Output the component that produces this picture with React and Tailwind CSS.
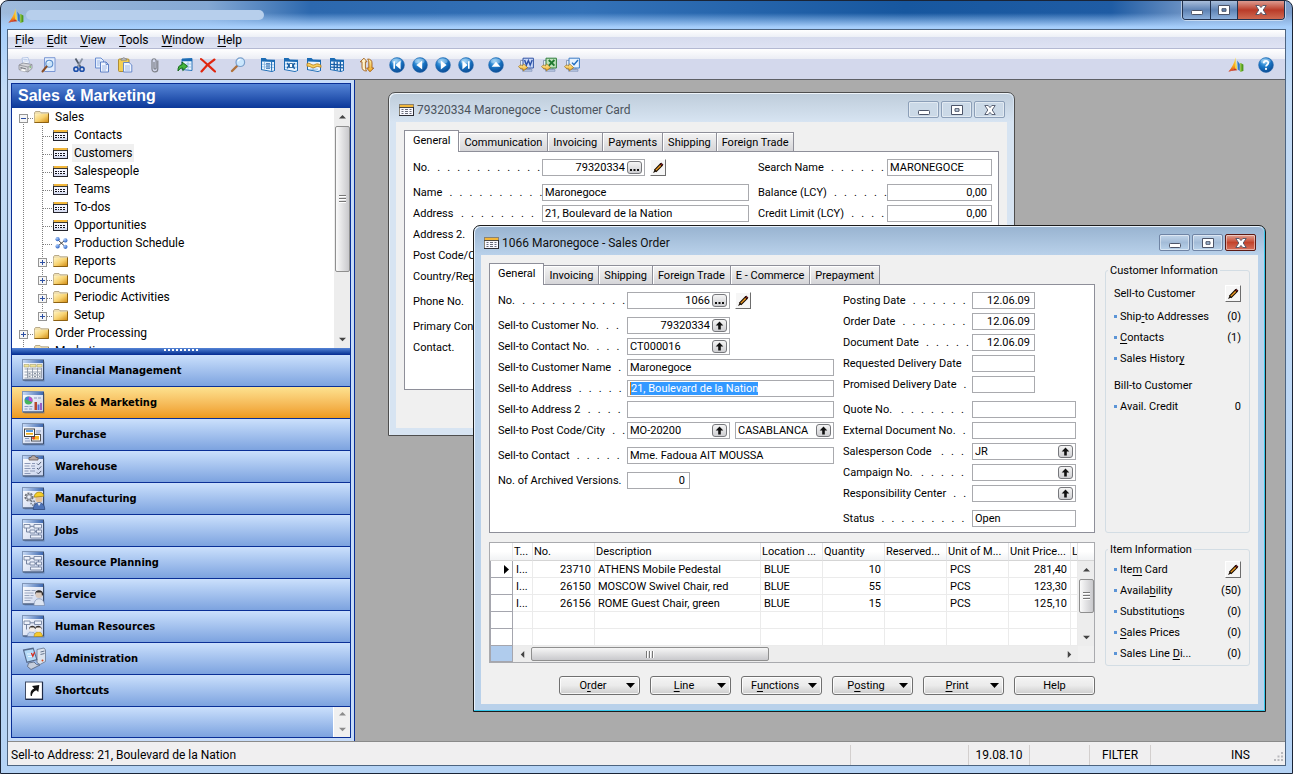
import React from "react";

/* ---------- shared SVG paint ---------- */

function Defs() {
  return (
    <svg className="absolute h-0 w-0" aria-hidden="true">
      <defs>
        <radialGradient id="orb" cx="0.4" cy="0.25" r="0.85">
          <stop offset="0" stopColor="#7cc4f4" />
          <stop offset="0.45" stopColor="#1a78c8" />
          <stop offset="1" stopColor="#083f86" />
        </radialGradient>
        <linearGradient id="folder" x1="0" y1="0" x2="1" y2="1">
          <stop offset="0" stopColor="#fff3c0" />
          <stop offset="0.5" stopColor="#f7d270" />
          <stop offset="1" stopColor="#d08a10" />
        </linearGradient>
        <linearGradient id="sheet" x1="0" y1="0" x2="1" y2="1">
          <stop offset="0" stopColor="#ffffff" />
          <stop offset="1" stopColor="#c4d0ec" />
        </linearGradient>
        <linearGradient id="bar" x1="0" y1="0" x2="1" y2="0">
          <stop offset="0" stopColor="#c5d8f4" />
          <stop offset="1" stopColor="#3f69b0" />
        </linearGradient>
        <linearGradient id="gold" x1="0" y1="0" x2="0" y2="1">
          <stop offset="0" stopColor="#fff2a8" />
          <stop offset="1" stopColor="#efa51c" />
        </linearGradient>
        <linearGradient id="sail" x1="0" y1="0" x2="0" y2="1">
          <stop offset="0" stopColor="#ffe34a" />
          <stop offset="0.6" stopColor="#f9a51a" />
          <stop offset="1" stopColor="#d6321c" />
        </linearGradient>
        <radialGradient id="dot" cx="0.35" cy="0.3" r="0.8">
          <stop offset="0" stopColor="#a8ccff" />
          <stop offset="1" stopColor="#1f55b8" />
        </radialGradient>
      </defs>
    </svg>
  );
}

function Svg({ children, className = "h-4 w-4", box = "0 0 16 16" }) {
  return (
    <svg viewBox={box} className={"block shrink-0 " + className} fill="none" aria-hidden="true">
      {children}
    </svg>
  );
}

/* ---------- toolbar icons ---------- */

const Logo = () => (
  <Svg>
    <path d="M7.4 .6 C6.6 6 3.6 11 .4 14.8 L7.6 11.8 Z" fill="url(#sail)" />
    <path d="M7.4 .6 L7.2 11.4 L9.4 13 Z" fill="#f3d63c" />
    <path d="M.4 14.8 L7.4 11.4 L9.4 13.2 L4.4 13.8 Z" fill="#c9381f" />
    <path d="M9.2 3.6 L11.8 7 V14 L9.8 12.6 Z" fill="#2f79c3" />
    <path d="M9.2 3.6 L10.2 12.8 L9.6 12.2 Z" fill="#7fb5e6" />
    <path d="M12.4 6 L15.4 7.6 V14 L12.4 14.8 Z" fill="#4f9a1e" />
    <path d="M12.4 6 L13.4 6.6 V14.5 L12.4 14.8 Z" fill="#9fd23c" />
  </Svg>
);

const Printer = () => (
  <Svg>
    <path d="M4 1 L10 .5 L11.5 6 L5 7 Z" fill="#f4f8ff" stroke="#9fb4dc" strokeWidth=".7" />
    <path d="M5.2 2.5h4.4M5.6 4h4.4" stroke="#a9bde2" strokeWidth=".7" />
    <path d="M1 8 L5 6 L14 7.5 V11.5 L10 15 L1 12.5 Z" fill="#d5d6da" stroke="#8b8d94" strokeWidth=".8" />
    <path d="M1 8 L10 10 L14 7.5 M10 10 V15" stroke="#8b8d94" strokeWidth=".8" />
    <path d="M2.5 10 L8 11.4 V13 L2.5 11.6 Z" fill="#6e7078" />
    <path d="M4 11.5 L8.5 12.6 L7 14.8 L2 13.6Z" fill="#fff" stroke="#9a9ca3" strokeWidth=".5" />
    <circle cx="12.3" cy="10" r=".8" fill="#5cb84a" />
  </Svg>
);

const Preview = () => (
  <Svg>
    <path d="M3.5 .7 H14 V14.5 H3.5 Z" fill="#e3edfd" stroke="#6f8fd0" strokeWidth=".9" />
    <circle cx="8.3" cy="6.8" r="3.5" fill="#c9e4fb" stroke="#5b8cc9" strokeWidth="1.1" />
    <path d="M6.5 6 a2.2 2.2 0 0 1 2-1.5" stroke="#fff" strokeWidth="1" />
    <path d="M5.6 9.5 L1.5 14.5" stroke="#8a4e26" strokeWidth="2" strokeLinecap="round" />
  </Svg>
);

const Cut = () => (
  <Svg>
    <path d="M4.5 1.5 L9.6 10" stroke="#4f5a68" strokeWidth="1.7" />
    <path d="M11.5 1.5 L6.4 10" stroke="#8a95a5" strokeWidth="1.7" />
    <circle cx="5" cy="12.2" r="2.1" stroke="#1c4ea8" strokeWidth="1.6" />
    <circle cx="11" cy="12.2" r="2.1" stroke="#1c4ea8" strokeWidth="1.6" />
  </Svg>
);

const Copy = () => (
  <Svg>
    <path d="M1.5 1 H7 L9.5 3.5 V11 H1.5 Z" fill="#e4eefd" stroke="#5f84cc" strokeWidth=".9" />
    <path d="M6.5 5 H12 L14.5 7.5 V15 H6.5 Z" fill="#f1f6ff" stroke="#4f75c0" strokeWidth=".9" />
    <path d="M12 5 V7.5 H14.5" stroke="#4f75c0" strokeWidth=".8" />
    <path d="M8 9h5M8 11h5M8 13h4M3 4h3M3 6h3M3 8h2.5" stroke="#8fabe0" strokeWidth=".8" />
  </Svg>
);

const Paste = () => (
  <Svg>
    <rect x="1.5" y="2" width="10.5" height="12.5" rx="1" fill="#f3cf52" stroke="#a8842a" strokeWidth=".9" />
    <path d="M4 3.2 V1.8 H5.3 C5.5 .4 8 .4 8.3 1.8 H9.6 V3.2 Z" fill="#c3c6cc" stroke="#777" strokeWidth=".7" />
    <path d="M6.5 5.5 H12 L14.8 8 V15 H6.5 Z" fill="#eff5ff" stroke="#5b80c6" strokeWidth=".9" />
    <path d="M8 9h5M8 11h5M8 13h5" stroke="#8fabe0" strokeWidth=".8" />
  </Svg>
);

const Clip = () => (
  <Svg>
    <path d="M10.8 3.5 V12 A2.9 2.9 0 0 1 5 12 V3.4 A2.1 2.1 0 0 1 9.1 3.4 V11.2 A1.1 1.1 0 0 1 7 11.2 V5" stroke="#7d8088" strokeWidth="1.2" />
  </Svg>
);

const BlueGrid = ({ children }) => (
  <Svg>
    <path d="M1 1 H5.5 L7 2.4 L15 2.8 V13.8 L12 15 L1 13 Z" fill="#1b6bb4" />
    <path d="M2 4.6 L14 5 V13.4 L11.6 14 L2 12.2 Z" fill="#e9f4ff" />
    {children}
  </Svg>
);

const GoTo = () => (
  <Svg>
    <path d="M5 2 L15 1.5 V13.5 L5 12.5 Z" fill="#eaf5ff" stroke="#1b6bb4" strokeWidth=".9" />
    <path d="M5 2 L15 1.5 V4.2 L5 4.3 Z" fill="#1b6bb4" />
    <path d="M8.5 7h6M8.5 10h6M11 4.5v8.5" stroke="#7db0de" strokeWidth=".7" />
    <path d="M5 5 L10.5 9.2 L5.8 13.6 V11 C3.8 11 2.4 12 1 14 C.8 10.5 2 8 5.2 7.6 Z" fill="#42b53c" stroke="#0d5c14" strokeWidth=".9" />
  </Svg>
);

const Delete = () => (
  <Svg>
    <path d="M1 2 C6 6 10 10 15 14.5 M14.5 2.5 C9 6 5 10 1.5 14.5" stroke="#e0260f" strokeWidth="2.1" strokeLinecap="round" />
  </Svg>
);

const Find = () => (
  <Svg>
    <path d="M7 9 L2 14" stroke="#b0713a" strokeWidth="2.4" strokeLinecap="round" />
    <circle cx="10.3" cy="5.2" r="4.3" fill="#cbe7fd" stroke="#7a9fcb" strokeWidth="1.2" />
    <path d="M7.8 4.4 A3 3 0 0 1 10.4 2.4" stroke="#fff" strokeWidth="1.2" />
  </Svg>
);

const GridA = () => (
  <BlueGrid>
    <path d="M4.5 4.6v8M2 7.2l12 .6M2 9.8l12 .8" stroke="#7db0de" strokeWidth=".7" />
    <path d="M6 6.8h4M6 9h4M6 11.2h4" stroke="#1b5fa8" strokeWidth="1" />
    <path d="M11.6 4.8v9" stroke="#1b6bb4" strokeWidth="1" />
  </BlueGrid>
);
const GridB = () => (
  <BlueGrid>
    <path d="M2 7h12M2 10.2h12" stroke="#7db0de" strokeWidth=".7" />
    <path d="M4.2 6 L6 8.6 L4.2 11.4 M11.6 6 L10 8.8 L11.6 11.8" stroke="#155ea6" strokeWidth="1.5" />
    <rect x="6.6" y="6.6" width="2.8" height="4" fill="#fff" stroke="#15558f" strokeWidth=".8" />
  </BlueGrid>
);
const GridC = () => (
  <BlueGrid>
    <path d="M4 12.2h8M7 11v2.4" stroke="#7db0de" strokeWidth=".8" />
    <path d="M1 6.5 C4 5 6 9.5 9 7.5 C11 6.2 13 7 15 8.3 V10.5 C12 9 10.5 9.5 9 10.3 C6 12 4 8.5 1 9.3 Z" fill="#f6cf5c" stroke="#b57a14" strokeWidth=".8" />
  </BlueGrid>
);
const GridD = () => (
  <BlueGrid>
    <path d="M5.2 4.4v8.6M8.2 4.4v9.2M11.4 4.6v9.6M2 7.4l12 .4M2 10.2l12 .6" stroke="#155ea6" strokeWidth="1.3" />
  </BlueGrid>
);

const Sort = () => (
  <Svg>
    <path d="M5 1.2 L8 4.8 H6.4 V10 C6.4 12 7 13 7.6 14 C4.5 14 3 12.5 3 10 V4.8 H1.2 Z" fill="#fff4cd" stroke="#a35d16" strokeWidth=".9" />
    <path d="M11 14.8 L14.8 11 H13 V6 C13 3.5 11.5 2 8.6 2 C9.4 3 9.8 4 9.8 6 V11 H7.6 Z" fill="url(#gold)" stroke="#a35d16" strokeWidth=".9" />
  </Svg>
);

const Orb = ({ children }) => (
  <Svg>
    <circle cx="8" cy="8" r="7.4" fill="url(#orb)" stroke="#2a6cb0" strokeWidth=".6" />
    <ellipse cx="7.6" cy="4" rx="5" ry="2.6" fill="#fff" opacity=".3" />
    {children}
  </Svg>
);
const First = () => (
  <Orb>
    <path d="M11.6 3.6 V12.4 L6.4 8 Z M4.4 4.2 H6 V11.8 H4.4 Z" fill="#fff" />
  </Orb>
);
const Prev = () => (
  <Orb>
    <path d="M10.2 3.6 V12.4 L4.4 8 Z" fill="#fff" />
  </Orb>
);
const Next = () => (
  <Orb>
    <path d="M5.8 3.6 V12.4 L11.6 8 Z" fill="#fff" />
  </Orb>
);
const Last = () => (
  <Orb>
    <path d="M4.4 3.6 V12.4 L9.6 8 Z M10 4.2 H11.6 V11.8 H10 Z" fill="#fff" />
  </Orb>
);
const Up = () => (
  <Orb>
    <path d="M3.6 9.8 H12.4 L8 4.8 Z" fill="#fff" />
  </Orb>
);
const HelpIcon = () => (
  <Orb>
    <path d="M5.8 6.2 C5.8 3.2 10.3 3.2 10.3 6 C10.3 7.7 8 7.8 8 9.6" stroke="#fff" strokeWidth="1.7" />
    <circle cx="8" cy="11.9" r="1.1" fill="#fff" />
  </Orb>
);

const Export = ({ edge, fill, children }) => (
  <Svg>
    <path d="M2.5 3.5 H12 V12 H2.5 Z" fill="#e6edf8" stroke="#7b8ba8" strokeWidth=".8" />
    <path d="M5 1.2 H15.4 V11 H5 Z" fill={fill} stroke={edge} strokeWidth="1" />
    {children}
    <path d="M4.5 12.5 h9.5 v1.8 h-9.5z" fill="#b9c8e4" stroke="#6b7fa6" strokeWidth=".5" />
    <path d="M.6 9.6 C2 7.6 3.4 8 4.6 8.8 L5.6 6.9 L9.6 10.6 L5.4 13.8 L5 12 C3.5 11.6 2 11.8 .6 9.6Z" fill="url(#gold)" stroke="#9c6a12" strokeWidth=".7" />
  </Svg>
);
const WordIcon = () => (
  <Export edge="#3455a4" fill="#c9d9f8">
    <path d="M6.6 3 L8.4 8 L10.4 3.5 L12.2 8 L14.2 3" stroke="#2a50a8" strokeWidth="1.4" />
  </Export>
);
const ExcelIcon = () => (
  <Export edge="#2f7d3a" fill="#bfe3bb">
    <path d="M7.8 3 L13.4 8.6 M13.4 3 L7.8 8.6" stroke="#1f7a30" strokeWidth="1.9" />
  </Export>
);
const TaskIcon = () => (
  <Export edge="#3c7cc4" fill="#e6f2ff">
    <path d="M8 5.6 L10 7.8 L14 3" stroke="#1d6cc0" strokeWidth="1.4" />
  </Export>
);

/* ---------- window and tree icons ---------- */

const FormIcon = () => (
  <Svg className="h-3 w-[15px]" box="0 0 15 12">
    <rect x=".5" y=".5" width="14" height="11" fill="#f8f8ff" stroke="#8a8272" />
    <rect x="1" y="1" width="13" height="2" fill="#f3b73a" />
    <path d="M0 3.5h15" stroke="#4a4640" />
    <path d="M0 11.5h15M14.5 3v9" stroke="#2c2c34" />
    <path d="M2.5 5.5h2M6 5.5h3M10.5 5.5h2M2.5 7.5h2M6 7.5h3M10.5 7.5h2M2.5 9.5h2M6 9.5h3M10.5 9.5h2" stroke="#6a6d7a" />
  </Svg>
);

/* The list form used in the tree has two rows of entries. */
const ListIcon = () => (
  <Svg className="h-3 w-[15px]" box="0 0 15 12">
    <rect x=".5" y="1.5" width="14" height="10" fill="#f2f4ff" stroke="#8a8272" />
    <rect x="1" y="1" width="13" height="2" fill="#f3b73a" />
    <path d="M0 3.5h15" stroke="#3a3834" />
    <path d="M1 10h13" stroke="#c3cbe6" />
    <path d="M0 11.5h15M14.5 3v9M.5 3v9" stroke="#24242c" />
    <path d="M2 6.5h2M5 6.5h1M7 6.5h2M10 6.5h2M2 8.5h2M5 8.5h1M7 8.5h2M10 8.5h2" stroke="#14141c" />
  </Svg>
);

const Folder = () => (
  <Svg className="h-3 w-[15px]" box="0 0 15 12">
    <path d="M.5 1.8 L1.5 .5 H6 L7 1.8 H14.5 V11.5 H.5 Z" fill="#f0e0b0" stroke="#a99a78" strokeWidth=".8" />
    <rect x=".8" y="3" width="13.6" height="8.4" fill="url(#folder)" />
    <path d="M14.5 2.5 V11.5 H.5" stroke="#8d6112" />
  </Svg>
);

const Network = () => (
  <Svg className="h-3 w-[15px]" box="0 0 15 12">
    <path d="M4.5 2.5 L12 9.5 M5 9 L11 4" stroke="#333" strokeWidth=".9" />
    <circle cx="4.6" cy="2.2" r="2.1" fill="url(#dot)" />
    <circle cx="4.6" cy="9.4" r="2.1" fill="url(#dot)" />
    <circle cx="12.4" cy="3.4" r="2.1" fill="url(#dot)" />
    <circle cx="12.4" cy="9.8" r="2.1" fill="url(#dot)" />
  </Svg>
);

const Pencil = () => (
  <Svg className="h-3 w-3" box="0 0 12 12">
    <path d="M2.6 7.8 L8.2 2 L10 3.8 L4.3 9.5 Z" fill="#f29a1d" stroke="#1c1208" strokeWidth="1.1" />
    <path d="M8.2 2 L9.2 1 L11 2.8 L10 3.8 Z" fill="#b0181b" stroke="#1c0808" strokeWidth="1" />
    <path d="M2.6 7.8 L4.3 9.5 L1 11.1 Z" fill="#1c1208" />
  </Svg>
);

/* ---------- navigation pane icons ---------- */

const Pane = ({ children }) => (
  <Svg className="h-[23px] w-6" box="0 0 24 23">
    <rect x="2.5" y="2.5" width="20" height="20" fill="#3d5c8c" opacity=".45" />
    <rect x=".5" y=".5" width="21" height="20.5" fill="url(#sheet)" stroke="#7f95b8" />
    <rect x="1" y="1" width="20" height="3" fill="url(#bar)" />
    <path d="M21.5 1 V21 H1" stroke="#3b4d6c" />
    {children}
  </Svg>
);

const paneIcons = {
  finance: (
    <Pane>
      <path d="M2 5.5h5v2.5H2zM8 5.5h6v2.5H8zM15 5.5h5v2.5h-5z" fill="#f0e49a" stroke="#9a9460" strokeWidth=".5" />
      <path d="M2 9.5h18v10H2z" fill="#fafbfd" />
      <path d="M2.5 10h17M2.5 13h17M2.5 16h17M2.5 19h17M5.5 9v10M10.5 9v10M15.5 9v10M19.5 9v10" stroke="#8f99a8" strokeWidth=".9" />
      <path d="M6.5 14.5h2M12 14.5h2M17 14.5h1.5M6.5 17.5h2M12 17.5h2M17 17.5h1.5" stroke="#7c8796" strokeWidth=".9" />
    </Pane>
  ),
  sales: (
    <Pane>
      <circle cx="6.5" cy="9.5" r="4" fill="#46b45c" />
      <path d="M6.5 9.5 V5.5 A4 4 0 0 1 10.2 11Z" fill="#c44ad0" />
      <path d="M6.5 9.5 L2.7 8.2 A4 4 0 0 1 6.5 5.5Z" fill="#3f7be0" />
      <path d="M12.5 11h2.5v8h-2.5z" fill="#b8452c" />
      <path d="M15.5 13.5h2v5.5h-2z" fill="#5a6ed0" />
      <path d="M18 12h2v7h-2z" fill="#9a5fc0" />
      <path d="M12 7h3M16 7h3M2.5 15.5h4M7.5 15.5h3M2.5 18h3M7 18h3" stroke="#8a9bc0" />
    </Pane>
  ),
  purchase: (
    <Pane>
      <rect x="9.5" y="11.5" width="9" height="6.5" fill="#fff" stroke="#444" strokeWidth=".9" />
      <rect x="11" y="13" width="6" height="3.6" fill="#f5b422" />
      <circle cx="11.5" cy="15" r="1.5" fill="#e2451e" />
      <rect x="2.5" y="6" width="10" height="7.5" fill="#fff" stroke="#444" />
      <path d="M4 8h7" stroke="#2b7fd6" strokeWidth="1.6" />
      <path d="M4 10.8h7" stroke="#f0b020" strokeWidth="1.8" />
      <path d="M14 8h5M14 10h4M3 15.5h4M3 18h5" stroke="#8a9bc0" />
    </Pane>
  ),
  warehouse: (
    <Pane>
      <path d="M7 5 V2.5 H9 C9.5 0 13.5 0 14 2.5 H16 V5 Z" fill="#b9aaa4" stroke="#5f5450" strokeWidth=".8" />
      <path d="M2.5 8.5h6M10 8.5h3M2.5 11h5M9 11h4M2.5 13.5h6M10 13.5h3M2.5 16h4M8 16h5M2.5 18.5h6" stroke="#8c99b8" />
      <path d="M15 8.5l1.4 1.4 2.8-3M15 13l1.4 1.4 2.8-3M15 17.5l1.4 1.4 2.8-3" stroke="#4c5870" />
    </Pane>
  ),
  manufacturing: (
    <Pane>
      <circle cx="7" cy="10" r="3.6" stroke="#70747e" strokeWidth="2" strokeDasharray="2 1" />
      <circle cx="7" cy="10" r="2.4" stroke="#8d929c" strokeWidth="1.3" />
      <circle cx="11" cy="16" r="2" stroke="#70747e" strokeWidth="1.4" strokeDasharray="1.4 .8" />
      <circle cx="17" cy="12" r="3.6" fill="#e6c49c" />
      <path d="M12.3 10.2 C12.3 3.6 21.5 3.6 21.8 9.2 Z" fill="#f4cf2a" stroke="#9b7a10" strokeWidth=".7" />
      <path d="M11.2 22.5 C11.5 17 14.5 15.8 17 15.8 C20 15.8 22.5 17.5 22.8 22.5 Z" fill="#4f74b8" stroke="#2b4478" strokeWidth=".7" />
      <path d="M15.5 16 L17 19 L18.8 16Z" fill="#e9edf8" />
    </Pane>
  ),
  flow: (
    <Pane>
      <path d="M2 5.5h6v3.5H2zM12 5.5h7.5v3.5H12zM8 11h5v3H8zM14.5 11h5v3h-5zM8.5 16h11v3h-11z" fill="#eef2fb" stroke="#7583a0" strokeWidth=".9" />
      <path d="M8 7.3h4M4.5 9v4h3.5M13 12.5h1.5M16.5 9v2M16.5 14v2" stroke="#7583a0" />
    </Pane>
  ),
  service: (
    <Pane>
      <path d="M2.5 7.5h6M9.5 7.5h4M2.5 10h9M2.5 12.5h5M8.5 12.5h3M2.5 15h8M2.5 17.5h6" stroke="#9aa6bf" />
      <circle cx="17" cy="11.5" r="3.6" fill="#d8c8bc" />
      <path d="M13 11.5 C12.5 5.8 21.5 5.8 21.2 11.5 L20 13 L19.5 9.5 L14 9.6Z" fill="#2c2a2a" />
      <path d="M12 22.5 C12 17.5 14.5 15.8 17 15.8 C20 15.8 22 17.5 22.5 22.5 Z" fill="#dde5f2" stroke="#8090b0" strokeWidth=".7" />
    </Pane>
  ),
  people: (
    <Pane>
      <path d="M2 6h6v3.5H2zM12.5 6h7v3.5h-7z" fill="#eef2fb" stroke="#7583a0" strokeWidth=".9" />
      <path d="M8 7.8h4.5M4.5 9.5v5" stroke="#7583a0" />
      <path d="M5.5 21.5 C5.5 18 7 17 9.5 17 C12 17 13 18.5 13.5 21.5Z" fill="#c7d6ee" stroke="#6f86b4" strokeWidth=".6" />
      <path d="M12 21.5 C12 18.5 14 17 16.5 17 C19 17 20 18.5 20.5 21.5Z" fill="#f6c92e" stroke="#b18a10" strokeWidth=".6" />
      <circle cx="10" cy="14" r="2.8" fill="#f4ece4" />
      <circle cx="16.5" cy="14" r="2.8" fill="#f4ece4" />
      <path d="M7 14.5 C6.5 9.8 13 9.6 13.2 13 C13.6 9.8 20 9.8 19.8 14.5 L18.6 12.6 L14.6 12.4 L13.2 14 L12 12.4 L8.2 12.6Z" fill="#3a3431" />
    </Pane>
  ),
  admin: (
    <Svg className="h-[23px] w-6" box="0 0 24 23">
      <path d="M15 2.5 L22 1 L23.5 3 V14.5 L18 17.5 L15 15.5 Z" fill="#dbe3ee" stroke="#66758e" strokeWidth=".8" />
      <path d="M18.5 5 L22.5 4 M18.5 7.5 L22.5 6.5" stroke="#66758e" />
      <circle cx="20.5" cy="13.5" r="1" fill="#d3461c" />
      <path d="M.8 2.5 L11.5 .6 L15.5 13 L4.5 16 Z" fill="#54688a" />
      <path d="M2.3 3.8 L11 2.2 L14.2 12.2 L5.2 14.4 Z" fill="#b4daf8" />
      <path d="M5 7 h4M6 9.5h4" stroke="#e9f6ff" />
      <path d="M9.4 6 L10.8 9.2 L12.6 5.2" stroke="#d92a1c" strokeWidth="1.3" />
      <path d="M6.5 16 L12 15 L14.5 17.5 L18 18 L9 22.5 L5.5 19.5Z" fill="#c5cedd" stroke="#54627a" strokeWidth=".8" />
    </Svg>
  ),
  shortcut: (
    <Svg className="h-[23px] w-6" box="0 0 24 23">
      <rect x="3.5" y="3" width="17" height="17" fill="#fff" stroke="#3f4c66" />
      <path d="M20.5 3 V20.5 H3.5" stroke="#1d2a48" strokeWidth="1.2" />
      <path d="M8.8 17 C8 13 9.5 10.5 12.2 9.6 L10 7 L17.3 6 L16.3 13 L14.2 11.2 C11.5 12.2 10.2 14 9.8 17 Z" fill="#111" />
    </Svg>
  ),
};

/* ---------- small parts ---------- */

/* An underscore marks the letter that carries the keyboard underline. */
function Mnemonic({ text }) {
  const i = text.indexOf("_");
  if (i < 0) return <>{text}</>;
  return (
    <>
      {text.slice(0, i)}
      <span className="underline underline-offset-2">{text[i + 1]}</span>
      {text.slice(i + 2)}
    </>
  );
}

const Arrow = ({ dir = "up", className = "text-[#444]" }) => {
  const d = { up: "M0 5 L4 1 L8 5Z", down: "M0 2 L4 6 L8 2Z", left: "M6 0 L2 4 L6 8Z", right: "M2 0 L6 4 L2 8Z" };
  return (
    <Svg className={"h-[7px] w-[7px] " + className} box="0 0 8 8">
      <path d={d[dir]} fill="currentColor" />
    </Svg>
  );
};

function VScroll({ thumb }) {
  return (
    <div className="flex w-4 shrink-0 flex-col items-center bg-[#ededed]" aria-hidden="true">
      <div className="flex h-[18px] shrink-0 items-center">
        <Arrow />
      </div>
      <div className={"flex w-[15px] shrink-0 flex-col items-center justify-center gap-px rounded-xs border border-[#8f8f8f] bg-linear-to-r from-[#fafafa] to-[#c9c9cc] " + thumb}>
        <i className="h-0.5 w-[7px] border-b border-white bg-[#777]" />
        <i className="h-0.5 w-[7px] border-b border-white bg-[#777]" />
        <i className="h-0.5 w-[7px] border-b border-white bg-[#777]" />
      </div>
      <div className="grow" />
      <div className="flex h-[18px] shrink-0 items-center">
        <Arrow dir="down" />
      </div>
    </div>
  );
}

const MinGlyph = () => (
  <Svg className="h-3 w-3" box="0 0 12 12">
    <rect x=".5" y="6.5" width="11" height="4" rx=".8" fill="#fff" stroke="#4c5468" />
  </Svg>
);
const MaxGlyph = () => (
  <Svg className="h-3 w-3" box="0 0 12 12">
    <path fillRule="evenodd" d="M.5 1.5 H11.5 V10.5 H.5Z M4 4.7 V7.3 H8 V4.7Z" fill="#fff" stroke="#4c5468" />
  </Svg>
);
const CloseGlyph = () => (
  <Svg className="h-3 w-3" box="0 0 12 12">
    <path d="M.8 1.5 H4.2 L6 3.6 L7.8 1.5 H11.2 L8.2 6 L11.2 10.5 H7.8 L6 8.4 L4.2 10.5 H.8 L3.8 6Z" fill="#fff" stroke="#4c5468" strokeWidth=".9" />
  </Svg>
);

function CaptionButtons({ active }) {
  const plain = active
    ? "border-[#6f84a4] bg-linear-to-b from-[#c3d6ea] via-[#a3bcd8] to-[#b9d2ea]"
    : "border-[#8c9fb8] bg-[#cbd9e7]";
  const close = active ? "border-[#5c1a14] bg-linear-to-b from-[#e0a193] via-[#c2432c] to-[#d6705c]" : plain;
  const base = "flex h-[17px] w-[31px] items-center justify-center rounded-xs border shadow-[inset_0_0_0_1px_rgba(255,255,255,0.45)] ";
  return (
    <div className="flex gap-0.5">
      <button aria-label="Minimize" className={base + plain}><MinGlyph /></button>
      <button aria-label="Maximize" className={base + plain}><MaxGlyph /></button>
      <button aria-label="Close" className={base + close}><CloseGlyph /></button>
    </div>
  );
}

function ChildWindow({ title, active, place, children }) {
  const frame = active
    ? "border-[#1c1c1c] bg-[#b9d1ea] shadow-[inset_-1px_-1px_0_#35c6ea,inset_1px_1px_0_#e8f2fc]"
    : "border-[#4e4e4e] bg-[#d7e4f2] shadow-[inset_1px_1px_0_#eef4fa]";
  const bar = active ? "from-[#99b4d1] to-[#b9d1ea] text-[#101010]" : "from-[#bfcddb] to-[#d7e4f2] text-[#4b535c]";
  return (
    <section className={"absolute flex flex-col rounded-t-[7px] border px-[7px] pb-[7px] " + frame + " " + place}>
      <header className={"mx-[-6px] mt-px flex h-7 shrink-0 items-center rounded-t-md bg-linear-to-b pl-[9px] pr-2 pt-[3px] font-[Roboto,sans-serif] text-xs " + bar}>
        <FormIcon />
        <h2 className="ml-[3px] grow whitespace-nowrap">{title}</h2>
        <CaptionButtons active={active} />
      </header>
      <div className="grow bg-[#f0f0f0]">{children}</div>
    </section>
  );
}

function Tabs({ names }) {
  return (
    <div role="tablist" className="flex h-[21px] items-end">
      {names.map((n, i) =>
        i === 0 ? (
          <button key={n} role="tab" aria-selected="true" className="relative -mb-px h-[22px] border border-b-0 border-[#8e8f99] bg-white px-2 pb-0.5">
            {n}
          </button>
        ) : (
          <button key={n} role="tab" aria-selected="false" className="h-[19px] whitespace-nowrap border border-b-0 border-l-0 border-[#8e8f99] bg-linear-to-b from-[#f4f4f4] to-[#d5d5d8] px-[5px] shadow-[inset_1px_1px_0_#fff]">
            {n}
          </button>
        )
      )}
    </div>
  );
}

function EditButton({ label }) {
  return (
    <button aria-label={label} className="flex h-[17px] w-4 items-center justify-center border border-b-[#6d6d6d] border-l-white border-r-[#6d6d6d] border-t-white bg-[#f6f6f6]">
      <Pencil />
    </button>
  );
}

function Row({ id, label, dots = 0, children }) {
  return (
    <div className="flex h-[17px] items-center">
      <label htmlFor={id} className="flex w-[129px] shrink-0 justify-between whitespace-nowrap pr-2">
        <span>{label}</span>
        <span className="flex" aria-hidden="true">
          {Array.from({ length: dots }, (_, i) => (
            <span key={i} className="w-2.5 text-right">.</span>
          ))}
        </span>
      </label>
      {children}
    </div>
  );
}

function Box({ id, value = "", w, right, pick, name }) {
  return (
    <div className={"flex h-[17px] items-center border border-[#a9aaae] bg-white pr-0.5 " + w}>
      <input
        id={id}
        aria-label={name}
        defaultValue={value}
        className={"h-[15px] w-0 min-w-0 grow bg-transparent px-0.5 outline-none " + (right ? "text-right" : "")}
      />
      {pick && (
        <button aria-label="Look up" className="flex h-[13px] w-[15px] shrink-0 items-center justify-center rounded-[3px] border border-[#77787c] bg-linear-to-b from-[#f5f5f5] to-[#cfcfd2]">
          {pick === "more" ? (
            <Svg className="h-[9px] w-[9px]" box="0 0 9 9">
              <path d="M0 6h2v2H0zM3.5 6h2v2h-2zM7 6h2v2H7z" fill="#111" />
            </Svg>
          ) : (
            <Svg className="h-[9px] w-[9px]" box="0 0 9 9">
              <path d="M4.5 .5 L8.3 4.5 H5.8 V8.5 H3.2 V4.5 H.7Z" fill="#111" />
            </Svg>
          )}
        </button>
      )}
    </div>
  );
}

/* ---------- customer card ---------- */

function CustomerCard() {
  return (
    <ChildWindow title="79320334 Maronegoce - Customer Card" place="left-[33px] top-3 h-[344px] w-[627px]">
      <div className="px-2 pt-2">
        <Tabs names={["General", "Communication", "Invoicing", "Payments", "Shipping", "Foreign Trade"]} />
        <div className="flex h-[239px] gap-[9px] border border-[#8e8f99] bg-white px-2 pt-[7px]">
          <div className="flex flex-col gap-2">
            <Row id="c-no" label="No." dots={11}>
              <Box id="c-no" value="79320334" w="w-[103px]" right pick="more" />
              <div className="ml-[5px]"><EditButton label="Edit number" /></div>
            </Row>
            <div className="flex flex-col gap-1">
              <Row id="c-name" label="Name" dots={10}><Box id="c-name" value="Maronegoce" w="w-[207px]" /></Row>
              <Row id="c-adr" label="Address" dots={8}><Box id="c-adr" value="21, Boulevard de la Nation" w="w-[207px]" /></Row>
              <Row id="c-adr2" label="Address 2."><Box id="c-adr2" w="w-[207px]" /></Row>
              <Row id="c-post" label="Post Code/City"><Box id="c-post" w="w-[103px]" pick="up" /></Row>
              <Row id="c-ctry" label="Country/Region"><Box id="c-ctry" w="w-[103px]" pick="up" /></Row>
            </div>
            <Row id="c-tel" label="Phone No."><Box id="c-tel" w="w-[207px]" /></Row>
            <div className="flex flex-col gap-1">
              <Row id="c-pri" label="Primary Contact"><Box id="c-pri" w="w-[103px]" pick="up" /></Row>
              <Row id="c-con" label="Contact."><Box id="c-con" w="w-[207px]" /></Row>
            </div>
          </div>
          <div className="flex flex-col gap-2">
            <Row id="c-search" label="Search Name" dots={6}><Box id="c-search" value="MARONEGOCE" w="w-[105px]" /></Row>
            <div className="flex flex-col gap-1">
              <Row id="c-bal" label="Balance (LCY)" dots={6}><Box id="c-bal" value="0,00" w="w-[105px]" right /></Row>
              <Row id="c-lim" label="Credit Limit (LCY)" dots={4}><Box id="c-lim" value="0,00" w="w-[105px]" right /></Row>
            </div>
          </div>
        </div>
      </div>
    </ChildWindow>
  );
}

/* ---------- sales order ---------- */

const lines = [
  ["23710", "ATHENS Mobile Pedestal", "BLUE", "10", "PCS", "281,40"],
  ["26150", "MOSCOW Swivel Chair, red", "BLUE", "55", "PCS", "123,30"],
  ["26156", "ROME Guest Chair, green", "BLUE", "15", "PCS", "125,10"],
  null,
  null,
];
const heads = ["", "T...", "No.", "Description", "Location ...", "Quantity", "Reserved...", "Unit of M...", "Unit Price...", "L"];

function OrderLines() {
  const cell = "h-[17px] overflow-hidden whitespace-nowrap border-b border-r border-[#ebebeb] p-0 px-[3px] ";
  return (
    <div className="flex h-[121px] border border-[#a9aaae] bg-white">
      <div className="min-w-0 grow">
        <table className="w-full table-fixed border-separate border-spacing-0">
          <colgroup>
            <col className="w-[23px]" />
            <col className="w-5" />
            <col className="w-[62px]" />
            <col className="w-[166px]" />
            <col className="w-[62px]" />
            <col className="w-[62px]" />
            <col className="w-[62px]" />
            <col className="w-[62px]" />
            <col className="w-[62px]" />
            <col />
          </colgroup>
          <thead>
            <tr>
              {heads.map((h, i) => (
                <th key={i} scope="col" className="h-[18px] overflow-hidden whitespace-nowrap border-b border-r border-b-[#d5d5d5] border-r-[#e4e5e8] bg-linear-to-b from-white from-50% to-[#f1f2f4] p-0 pl-px text-left font-normal">
                  {h}
                </th>
              ))}
            </tr>
          </thead>
          <tbody>
            {lines.map((r, i) => (
              <tr key={i}>
                <td className="h-[17px] border border-t-0 border-[#a5a6ae] p-0">
                  {i === 0 && (
                    <Svg className="ml-auto mr-0.5 h-[9px] w-[7px]" box="0 0 7 9">
                      <path d="M1 0 L6 4.5 L1 9Z" fill="#000" />
                    </Svg>
                  )}
                </td>
                <td className={cell}>{r && "I..."}</td>
                <td className={cell + "text-right"}>{r && r[0]}</td>
                <td className={cell}>{r && r[1]}</td>
                <td className={cell}>{r && r[2]}</td>
                <td className={cell + "text-right"}>{r && r[3]}</td>
                <td className={cell}></td>
                <td className={cell}>{r && r[4]}</td>
                <td className={cell + "text-right"}>{r && r[5]}</td>
                <td className={cell}></td>
              </tr>
            ))}
          </tbody>
        </table>
        <div className="flex h-4 bg-[#ededed]" aria-hidden="true">
          <div className="w-[23px] border border-t-0 border-[#a5a6ae] bg-[#b0cced]" />
          <div className="flex w-[18px] items-center justify-center"><Arrow dir="left" /></div>
          <div className="my-px flex w-[238px] items-center justify-center gap-px rounded-xs border border-[#8f8f8f] bg-linear-to-b from-[#f6f6f6] to-[#c9c9cc]">
            <i className="h-[7px] w-0.5 border-r border-white bg-[#777]" />
            <i className="h-[7px] w-0.5 border-r border-white bg-[#777]" />
            <i className="h-[7px] w-0.5 border-r border-white bg-[#777]" />
          </div>
          <div className="ml-auto flex w-[18px] items-center justify-center"><Arrow dir="right" /></div>
        </div>
      </div>
      <div className="flex flex-col bg-[#f0f0f0]">
        <div className="h-[18px] border-b border-[#d5d5d5] bg-linear-to-b from-white from-50% to-[#f1f2f4]" />
        <div className="flex h-[85px]"><VScroll thumb="h-[34px]" /></div>
      </div>
    </div>
  );
}

function InfoLink({ text, value, action }) {
  return (
    <div className="flex h-[21px] items-center">
      <i className="mr-[3px] h-[3px] w-[3px] bg-[#5b94d6]" />
      <a href="#" className="grow whitespace-nowrap"><Mnemonic text={text} /></a>
      {value && <span>{value}</span>}
      {action}
    </div>
  );
}

function InfoPanel({ title, className, children }) {
  return (
    <fieldset className={"min-w-0 rounded-[3px] border border-[#d3dde4] pl-2 pr-2 " + className}>
      <legend className="-ml-1.5 h-[13px] px-0.5 leading-[13px]">{title}</legend>
      {children}
    </fieldset>
  );
}

function SalesOrder() {
  const menus = ["O_rder", "_Line", "F_unctions", "P_osting", "_Print"];
  return (
    <ChildWindow title="1066 Maronegoce - Sales Order" active place="left-[118px] top-[145px] h-[487px] w-[793px]">
      <div className="flex gap-2.5 px-2 pt-2">
        <div className="flex min-w-0 grow flex-col">
          <Tabs names={["General", "Invoicing", "Shipping", "Foreign Trade", "E - Commerce", "Prepayment"]} />
          <div className="flex h-[249px] gap-[9px] border border-[#8e8f99] bg-white px-2 pt-[7px]">
            <div className="flex flex-col gap-2">
              <Row id="s-no" label="No." dots={11}>
                <Box id="s-no" value="1066" w="w-[103px]" right pick="more" />
                <div className="ml-[5px]"><EditButton label="Edit number" /></div>
              </Row>
              <div className="flex flex-col gap-1">
                <Row id="s-cust" label="Sell-to Customer No." dots={2}><Box id="s-cust" value="79320334" w="w-[103px]" right pick="up" /></Row>
                <Row id="s-cont" label="Sell-to Contact No." dots={3}><Box id="s-cont" value="CT000016" w="w-[103px]" pick="up" /></Row>
                <Row id="s-name" label="Sell-to Customer Name" dots={1}><Box id="s-name" value="Maronegoce" w="w-[207px]" /></Row>
                <Row id="s-adr" label="Sell-to Address" dots={5}>
                  <div className="flex h-[17px] w-[207px] items-center border border-[#a9aaae] bg-white pl-0.5">
                    <input id="s-adr" defaultValue="21, Boulevard de la Nation" className="field-sizing-content h-[13px] border-l border-[#e07b10] bg-[#3399ff] text-white outline-none" />
                  </div>
                </Row>
                <Row id="s-adr2" label="Sell-to Address 2" dots={4}><Box id="s-adr2" w="w-[207px]" /></Row>
                <Row id="s-post" label="Sell-to Post Code/City" dots={2}>
                  <Box id="s-post" value="MO-20200" w="w-[103px]" pick="up" />
                  <div className="ml-[5px]"><Box name="City" value="CASABLANCA" w="w-[99px]" pick="up" /></div>
                </Row>
              </div>
              <Row id="s-con" label="Sell-to Contact" dots={5}><Box id="s-con" value="Mme. Fadoua AIT MOUSSA" w="w-[207px]" /></Row>
              <Row id="s-arc" label="No. of Archived Versions."><Box id="s-arc" value="0" w="w-[63px]" right /></Row>
            </div>
            <div className="flex flex-col gap-2">
              <div className="flex flex-col gap-1">
                <Row id="s-pd" label="Posting Date" dots={6}><Box id="s-pd" value="12.06.09" w="w-[63px]" right /></Row>
                <Row id="s-od" label="Order Date" dots={7}><Box id="s-od" value="12.06.09" w="w-[63px]" right /></Row>
                <Row id="s-dd" label="Document Date" dots={5}><Box id="s-dd" value="12.06.09" w="w-[63px]" right /></Row>
                <Row id="s-rd" label="Requested Delivery Date"><Box id="s-rd" w="w-[63px]" /></Row>
                <Row id="s-prd" label="Promised Delivery Date" dots={1}><Box id="s-prd" w="w-[63px]" /></Row>
              </div>
              <div className="flex flex-col gap-1">
                <Row id="s-qn" label="Quote No." dots={7}><Box id="s-qn" w="w-[104px]" /></Row>
                <Row id="s-ed" label="External Document No." dots={1}><Box id="s-ed" w="w-[104px]" /></Row>
                <Row id="s-sp" label="Salesperson Code" dots={3}><Box id="s-sp" value="JR" w="w-[104px]" pick="up" /></Row>
                <Row id="s-cn" label="Campaign No." dots={5}><Box id="s-cn" w="w-[104px]" pick="up" /></Row>
                <Row id="s-rc" label="Responsibility Center" dots={2}><Box id="s-rc" w="w-[104px]" pick="up" /></Row>
              </div>
              <Row id="s-st" label="Status" dots={9}><Box id="s-st" value="Open" w="w-[104px]" /></Row>
            </div>
          </div>
          <div className="mt-[9px]"><OrderLines /></div>
          <div className="mt-[13px] flex justify-end gap-2.5">
            {menus.map((m) => (
              <button key={m} className="flex h-[19px] w-[81px] items-center rounded-[3px] border border-[#707070] bg-linear-to-b from-[#f4f4f4] via-[#ebebeb] to-[#cdcdcd] pr-1 shadow-[inset_0_0_0_1px_rgba(255,255,255,0.8)]">
                <span className="grow text-center"><Mnemonic text={m} /></span>
                <Svg className="h-[5px] w-[9px]" box="0 0 9 5">
                  <path d="M0 0 H9 L4.5 5Z" fill="#000" />
                </Svg>
              </button>
            ))}
            <button className="h-[19px] w-[81px] rounded-[3px] border border-[#707070] bg-linear-to-b from-[#f4f4f4] via-[#ebebeb] to-[#cdcdcd] shadow-[inset_0_0_0_1px_rgba(255,255,255,0.8)]">
              Help
            </button>
          </div>
        </div>
        <aside className="flex w-[145px] shrink-0 flex-col gap-2.5 pt-px">
          <InfoPanel title="Customer Information" className="h-[269px]">
            <div className="mt-1.5 flex h-[21px] items-center justify-between">
              <span>Sell-to Customer</span>
              <EditButton label="Edit customer" />
            </div>
            <div className="mt-0.5">
              <InfoLink text="Ship_-to Addresses" value="(0)" />
              <InfoLink text="_Contacts" value="(1)" />
              <InfoLink text="Sales Histor_y" />
            </div>
            <div className="mt-1.5 flex h-[21px] items-center">Bill-to Customer</div>
            <InfoLink text="Avail. Credit" value="0" />
          </InfoPanel>
          <InfoPanel title="Item Information" className="h-[123px]">
            <div className="mt-[3px]">
              <InfoLink text="Ite_m Card" action={<EditButton label="Edit item" />} />
              <InfoLink text="Availa_bility" value="(50)" />
              <InfoLink text="Substitutio_ns" value="(0)" />
              <InfoLink text="_Sales Prices" value="(0)" />
              <InfoLink text="Sales Line _Di..." value="(0)" />
            </div>
          </InfoPanel>
        </aside>
      </div>
    </ChildWindow>
  );
}

/* ---------- navigation pane ---------- */

const tree = [
  ["Sales", 0, "minus", Folder],
  ["Contacts", 1, "", ListIcon],
  ["Customers", 1, "", ListIcon],
  ["Salespeople", 1, "", ListIcon],
  ["Teams", 1, "", ListIcon],
  ["To-dos", 1, "", ListIcon],
  ["Opportunities", 1, "", ListIcon],
  ["Production Schedule", 1, "", Network],
  ["Reports", 1, "plus", Folder],
  ["Documents", 1, "plus", Folder],
  ["Periodic Activities", 1, "plus", Folder],
  ["Setup", 1, "plus", Folder],
  ["Order Processing", 0, "plus", Folder],
  ["Marketing", 0, "", Folder],
];

/* Guide lines and expander of one tree level, 19px wide. */
function Guide({ kind, elbow, first, last }) {
  return (
    <svg viewBox="0 0 19 18" className="block h-[18px] w-[19px] shrink-0" fill="none" aria-hidden="true">
      <path d={"M8.5 " + (first ? 10 : 0) + "V" + (last ? 10 : 18)} stroke="#808080" strokeDasharray="1 1" />
      {elbow && <path d="M9 10.5H19" stroke="#808080" strokeDasharray="1 1" />}
      {kind && (
        <>
          <rect x="4.5" y="6.5" width="8" height="8" fill="#f6f6f6" stroke="#949494" />
          <path d={kind === "plus" ? "M6 10.5h5M8.5 8v5" : "M6 10.5h5"} stroke="#2c4fa3" />
        </>
      )}
    </svg>
  );
}

function Tree() {
  return (
    <ul className="min-w-0 grow overflow-hidden bg-white pl-[3px] text-xs">
      {tree.map(([name, level, kind, Icon], i) => (
        <li key={name} className="flex h-[18px] items-center whitespace-nowrap">
          {level === 1 && <Guide />}
          <Guide kind={kind} elbow first={i === 0} last={name === "Setup"} />
          <Icon />
          <span className={"ml-1 px-0.5 leading-[18px] " + (name === "Customers" ? "bg-[#f0f0f0]" : "")}>{name}</span>
        </li>
      ))}
    </ul>
  );
}

const areas = [
  ["Financial Management", "finance"],
  ["Sales & Marketing", "sales"],
  ["Purchase", "purchase"],
  ["Warehouse", "warehouse"],
  ["Manufacturing", "manufacturing"],
  ["Jobs", "flow"],
  ["Resource Planning", "flow"],
  ["Service", "service"],
  ["Human Resources", "people"],
  ["Administration", "admin"],
  ["Shortcuts", "shortcut"],
];

function NavPane() {
  return (
    <nav className="flex w-[347px] shrink-0 border-r border-[#0a2f96] bg-[#c8dcf8] p-[3px]">
      <div className="flex min-w-0 grow flex-col border border-[#0a2f96]">
        <h1 className="flex h-6 shrink-0 items-center bg-linear-to-b from-[#5584d6] to-[#0b3799] pl-1.5 font-['Liberation_Sans',sans-serif] text-base font-bold text-white">
          Sales &amp; Marketing
        </h1>
        <div className="flex min-h-0 grow overflow-hidden">
          <Tree />
          <VScroll thumb="h-[146px]" />
        </div>
        <div className="flex h-1.5 shrink-0 justify-center gap-0.5 bg-linear-to-b from-[#5584d6] to-[#0b3799] pt-px" aria-hidden="true">
          {Array.from({ length: 9 }, (_, i) => (
            <i key={i} className="h-0.5 w-0.5 bg-white" />
          ))}
        </div>
        {areas.map(([name, icon]) => (
          <button
            key={name}
            className={
              "flex h-8 shrink-0 items-center gap-[9px] border-t border-[#0a2f96] bg-linear-to-b pl-2.5 font-['DejaVu_Sans_Condensed','DejaVu_Sans',sans-serif] text-[11px] font-bold " +
              (icon === "sales" ? "from-[#fde28f] to-[#ee9a17]" : "from-[#cbe0fc] to-[#7da3df]")
            }
          >
            {paneIcons[icon]}
            <span className="pt-0.5">{name}</span>
          </button>
        ))}
        <div className="flex h-[31px] shrink-0 border-t border-[#0a2f96] bg-linear-to-b from-[#cbe0fc] to-[#7da3df]">
          <div className="ml-auto flex w-[17px] flex-col items-center justify-around border-l border-white bg-[#f0f0f0]" aria-hidden="true">
            <Arrow className="text-[#8c8c8c]" />
            <Arrow dir="down" className="text-[#8c8c8c]" />
          </div>
        </div>
      </div>
    </nav>
  );
}

/* ---------- application frame ---------- */

const toolGroups = [
  [["Print", Printer], ["Preview", Preview]],
  [["Cut", Cut], ["Copy", Copy], ["Paste", Paste]],
  [["Attach", Clip]],
  [["Insert", GoTo], ["Delete", Delete]],
  [["Find", Find]],
  [["Field filter", GridA], ["Table filter", GridB], ["Flow filter", GridC], ["Show all", GridD]],
  [["Sort", Sort]],
  [["First", First], ["Previous", Prev], ["Next", Next], ["Last", Last]],
  [["List", Up]],
  [["Send to Word", WordIcon], ["Send to Excel", ExcelIcon], ["Send to task", TaskIcon]],
];

export default function App() {
  const cap = "flex items-center justify-center border-r border-[#22324f] ";
  return (
    <div className="flex h-screen flex-col overflow-hidden rounded-t-lg border border-[#1a2436] bg-[linear-gradient(to_bottom,transparent_12px,#a6cefb_26px,#c3dbf5_90px,#b5d3f5_100%),linear-gradient(to_right,#9fbbdc_0%,#84a8d4_16%,#2c68ae_24%,#3472b8_45%,#17579f_70%,#1f5ca4_86%,#7c9dca_93%)] px-1.5 pb-[7px] font-[Roboto,sans-serif] text-xs text-black">
      <Defs />
      <header className="flex h-7 shrink-0 items-start">
        <div className="ml-px mt-[7px]"><Logo /></div>
        <div className="ml-0.5 mt-[9px] h-2.5 w-[238px] rounded-full bg-[#b7cfec]" />
        <div className="ml-auto mr-px flex h-[19px] overflow-hidden rounded-b border border-t-0 border-[#22324f] shadow-[0_0_0_1px_rgba(255,255,255,0.5)]">
          <button aria-label="Minimize" className={cap + "w-7 bg-linear-to-b from-[#a9bedb] via-[#5f83b4] to-[#8db0dc]"}><MinGlyph /></button>
          <button aria-label="Maximize" className={cap + "w-[27px] bg-linear-to-b from-[#a9bedb] via-[#5f83b4] to-[#8db0dc]"}><MaxGlyph /></button>
          <button aria-label="Close" className="flex w-[46px] items-center justify-center bg-linear-to-b from-[#dc9a90] via-[#b93a28] to-[#cf6a52]"><CloseGlyph /></button>
        </div>
      </header>

      <div className="flex min-h-0 grow flex-col border border-[#4d6480] bg-[#f0f0f0]">
        <div className="flex h-[19px] shrink-0 items-center gap-[13px] border-b border-[#b4b9d2] bg-[linear-gradient(to_bottom,#ffffff,#eceff6_40%,#d7dcee_41%,#dfe3f3)] pl-[7px] pt-0.5">
          {["_File", "_Edit", "_View", "_Tools", "_Window", "_Help"].map((m) => (
            <button key={m}><Mnemonic text={m} /></button>
          ))}
        </div>
        <div className="flex h-[31px] shrink-0 items-center gap-[14px] border-b border-[#5e6066] bg-[linear-gradient(to_bottom,#ffffff,#eceef5_32%,#d3d8ec_33%,#d3d8ec)] pl-2.5 pr-[11px] pt-px">
          {toolGroups.map((g, i) => (
            <div key={i} className="flex gap-[7px]">
              {g.map(([name, Icon]) => (
                <button key={name} aria-label={name}><Icon /></button>
              ))}
            </div>
          ))}
          <div className="ml-auto flex gap-[14px]">
            <button aria-label="About"><Logo /></button>
            <button aria-label="Help"><HelpIcon /></button>
          </div>
        </div>

        <div className="flex min-h-0 grow">
          <NavPane />
          <main className="relative min-w-0 grow overflow-hidden bg-[#ababab] text-[11px] leading-[13px]">
            <CustomerCard />
            <SalesOrder />
          </main>
        </div>

        <footer className="flex h-6 shrink-0 items-center border-t border-[#8a8a8a] bg-[#f0eff0] pl-[3px] pt-0.5">
          <span className="grow">Sell-to Address: 21, Boulevard de la Nation</span>
          <span className="h-5 w-[118px] border-l border-[#d3cfce]" />
          <span className="flex h-5 w-[61px] items-center justify-center border-l border-[#d3cfce]">19.08.10</span>
          <span className="h-5 w-[60px] border-l border-[#d3cfce]" />
          <span className="flex h-5 w-[61px] items-center justify-center border-l border-[#d3cfce]">FILTER</span>
          <span className="h-5 w-[60px] border-l border-[#d3cfce]" />
          <span className="w-[61px] text-center">INS</span>
          <Svg className="h-3 w-[14px]" box="0 0 14 12">
            <path d="M10 10h2v2h-2zM6.5 10h2v2h-2zM3 10h2v2H3zM10 6.5h2v2h-2zM6.5 6.5h2v2h-2zM10 3h2v2h-2z" fill="#b9b9bd" />
          </Svg>
        </footer>
      </div>
    </div>
  );
}
